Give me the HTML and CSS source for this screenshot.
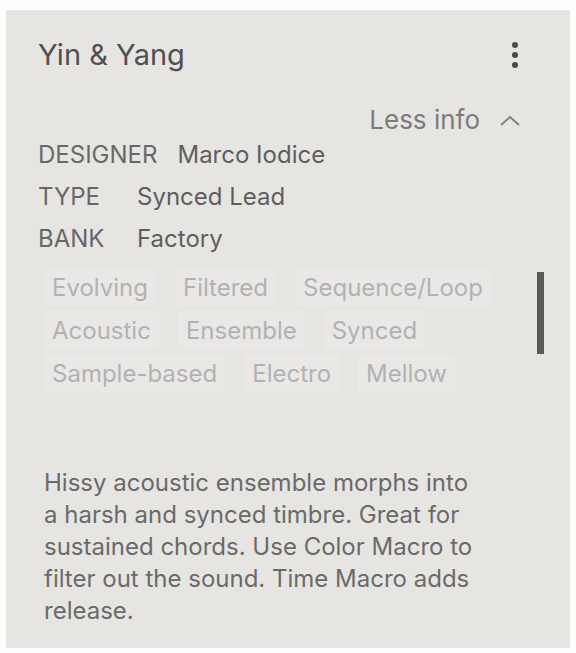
FILE: index.html
```html
<!DOCTYPE html>
<html lang="en">
<head>
    <meta charset="UTF-8">
    <meta name="viewport" content="width=device-width, initial-scale=1.0">
    <title>Yin &amp; Yang</title>
    <link rel="stylesheet" href="styles.css">
</head>
<body>
    <div class="card">
        <div class="card-header">
            <h1>Yin &amp; Yang</h1>
            <button class="menu-btn" aria-label="More">
                <span></span><span></span><span></span>
            </button>
        </div>

        <div class="toggle-row">
            <span class="toggle">Less info
                <svg width="26" height="14" viewBox="0 0 26 14"><path d="M4 12 L13 4 L22 12" fill="none" stroke="#808080" stroke-width="2"/></svg>
            </span>
        </div>

        <div class="meta">
            <div class="meta-row"><span class="meta-label">DESIGNER</span><span class="meta-value">Marco Iodice</span></div>
            <div class="meta-row"><span class="meta-label short">TYPE</span><span class="meta-value">Synced Lead</span></div>
            <div class="meta-row"><span class="meta-label short">BANK</span><span class="meta-value">Factory</span></div>
        </div>

        <div class="tags-area">
            <div class="tags">
                <div class="tag-row">
                    <span class="tag">Evolving</span>
                    <span class="tag">Filtered</span>
                    <span class="tag">Sequence/Loop</span>
                </div>
                <div class="tag-row">
                    <span class="tag">Acoustic</span>
                    <span class="tag">Ensemble</span>
                    <span class="tag">Synced</span>
                </div>
                <div class="tag-row">
                    <span class="tag">Sample-based</span>
                    <span class="tag">Electro</span>
                    <span class="tag">Mellow</span>
                </div>
            </div>
            <div class="scrollbar"></div>
        </div>

        <p class="description">Hissy acoustic ensemble morphs into a harsh and synced timbre. Great for sustained chords. Use Color Macro to filter out the sound. Time Macro adds release.</p>
    </div>
</body>
</html>
```

FILE: styles.css
```css
body {
    margin: 0;
    padding: 0;
    background-color: #fdfdfd;
    font-family: Inter, "Noto Sans", sans-serif;
}

.card {
    margin: 10px 6px 0 6px;
    height: 638px;
    box-sizing: border-box;
    padding: 28px 32px 0 32px;
    background-color: #e7e5e2;
    color: #5a5a5a;
}

.card-header {
    display: flex;
    justify-content: space-between;
    align-items: center;
}

h1 {
    margin: 0;
    font-size: 29px;
    font-weight: 400;
    color: #505050;
    line-height: 34px;
}

.menu-btn {
    display: flex;
    flex-direction: column;
    gap: 4px;
    padding: 0;
    margin-right: 20px;
    border: none;
    background: none;
}

.menu-btn span {
    width: 6px;
    height: 6px;
    border-radius: 50%;
    background-color: #4a4a4a;
}

.toggle-row {
    display: flex;
    justify-content: flex-end;
    margin-top: 32px;
}

.toggle {
    display: flex;
    align-items: center;
    gap: 17px;
    margin-right: 15px;
    font-size: 26px;
    color: #7c7c7c;
}

.meta {
    margin-top: -2px;
}

.meta-row {
    display: flex;
    gap: 20px;
    height: 42px;
    align-items: center;
    font-size: 24px;
}

.meta-label {
    color: #686868;
}

.meta-label.short {
    width: 79px;
}

.meta-value {
    color: #5e5e5e;
}

.tags-area {
    display: flex;
    justify-content: space-between;
    margin-top: 9px;
    margin-left: 6px;
}

.tags {
    display: flex;
    flex-direction: column;
    gap: 4px;
}

.tag-row {
    display: flex;
    gap: 19px;
}

.tag {
    padding: 5px 8px;
    background-color: #eae8e6;
    font-size: 24px;
    color: #b2b2b2;
}

.scrollbar {
    width: 7px;
    height: 82px;
    margin-top: 4px;
    margin-right: -6px;
    background-color: #5a5a5a;
}

.description {
    width: 440px;
    margin: 74px 0 0 6px;
    font-size: 24px;
    line-height: 32px;
    color: #6a6a6a;
}
```
